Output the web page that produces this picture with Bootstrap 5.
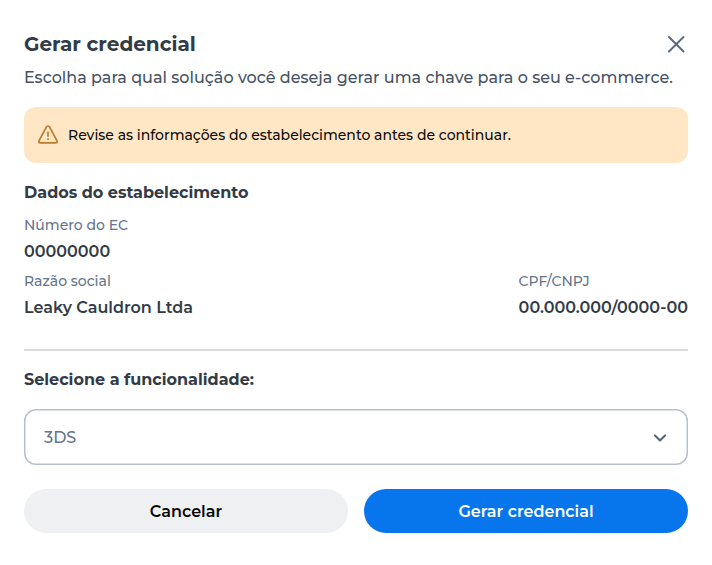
<!DOCTYPE html>
<html lang="pt-BR">
<head>
<meta charset="utf-8">
<meta name="viewport" content="width=device-width, initial-scale=1">
<title>Gerar credencial</title>
<link href="https://cdn.jsdelivr.net/npm/bootstrap@5.3.0/dist/css/bootstrap.min.css" rel="stylesheet">
<style>
body{font-family:Montserrat,Inter,"Open Sans",sans-serif;font-size:16px;line-height:24px;color:#323b45;background:#fff}
.dialog-pane{padding:28px 24px 32px}
.dialog-title{font-size:20px;line-height:32px;font-weight:700}
.dialog-lead{color:#475364;margin-top:6px;font-weight:500;white-space:nowrap}
.close-x{width:24px;height:24px;color:#5b6b7e}
.notice{height:56px;margin-top:17px;padding:0 14px;gap:10px;border-radius:12px;background:#ffe7c6;color:#0c0c0c;font-size:14px;font-weight:500}
.section-title{font-weight:700;font-size:16px;line-height:24px}
.merchant{padding-top:18px}
.dado-label{font-size:14px;line-height:20px;font-weight:500;color:#64748b}
.dado-value{font-weight:600;line-height:24px;margin-top:5px}
.dado-first{margin-top:10px}
.dado-row{margin-top:7px}
.divider{height:2px;margin-top:29px;background:#d9dde2}
.feature-title{margin:17px 0 0}
.select-box{height:56px;margin-top:17px;padding:0 18px 0 20px;box-shadow:inset 0 0 0 1.5px #b6bfcd;border-radius:12px;color:#64748b;background:#fff;font-weight:500}
.select-value{padding-top:2px}
.btn-pill{height:44px;font-size:16px;line-height:24px;font-weight:600;border:0;padding:2px 0 0}
.btn-cancel{background:#eff0f2;color:#080808}
.btn-go{background:#0775eb;color:#fff}
</style>
</head>
<body>
<main class="dialog-pane">
  <header>
    <div class="d-flex justify-content-between align-items-center">
      <h1 class="dialog-title m-0">Gerar credencial</h1>
      <button class="btn p-0 border-0 d-flex close-x" type="button" aria-label="Fechar">
        <svg width="24" height="24" viewBox="0 0 24 24" fill="none" stroke="currentColor" stroke-width="2" stroke-linecap="round"><path d="M5 5l14.500 14.500M19.500 5L5 19.500"/></svg>
      </button>
    </div>
    <p class="dialog-lead mb-0">Escolha para qual solução você deseja gerar uma chave para o seu e-commerce.</p>
  </header>
  <div class="notice d-flex align-items-center" role="alert">
    <svg width="20" height="20" viewBox="0 0 20 20" fill="none" stroke="#bd7c2c" stroke-width="1.700" stroke-linejoin="round" stroke-linecap="round"><path d="M8.500 1.900L1.100 15.600Q.3 17.800 2.300 17.800H17.700Q19.700 17.800 18.900 15.600L11.500 1.900Q10 .1 8.500 1.900Z"/><path d="M10 7.500v3.500M10 14v.1" stroke-linecap="square"/></svg>
    <span>Revise as informações do estabelecimento antes de continuar.</span>
  </div>
  <section class="merchant">
    <h2 class="section-title mb-0">Dados do estabelecimento</h2>
    <div class="dado-label dado-first">Número do EC</div>
    <div class="dado-value">00000000</div>
    <div class="dado-row d-flex justify-content-between">
      <div><div class="dado-label">Razão social</div><div class="dado-value">Leaky Cauldron Ltda</div></div>
      <div><div class="dado-label">CPF/CNPJ</div><div class="dado-value">00.000.000/0000-00</div></div>
    </div>
  </section>
  <div class="divider"></div>
  <h2 class="section-title feature-title">Selecione a funcionalidade:</h2>
  <div class="select-box d-flex align-items-center justify-content-between" role="combobox" tabindex="0">
    <span class="select-value">3DS</span>
    <svg width="20" height="20" viewBox="0 0 20 20" fill="none" stroke="#526174" stroke-width="2" stroke-linecap="round" stroke-linejoin="round"><path d="M5 8.500l5 5 5-5"/></svg>
  </div>
  <div class="row g-3 mt-2">
    <div class="col-6"><button type="button" class="btn btn-pill btn-cancel rounded-pill w-100">Cancelar</button></div>
    <div class="col-6"><button type="button" class="btn btn-pill btn-go rounded-pill w-100">Gerar credencial</button></div>
  </div>
</main>
<script src="https://cdn.jsdelivr.net/npm/bootstrap@5.3.0/dist/js/bootstrap.bundle.min.js"></script>
</body>
</html>
